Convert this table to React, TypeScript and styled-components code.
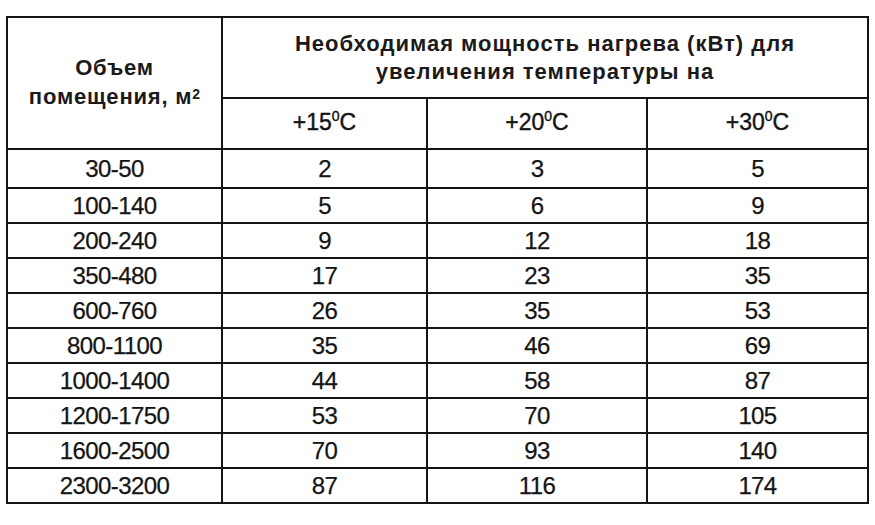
import React from "react";
import styled, { createGlobalStyle } from "styled-components";

const Global = createGlobalStyle`
  html, body { margin: 0; padding: 0; background: #fff; }
  body { font-family: "Liberation Sans", Arial, sans-serif; color: #111; }
`;

const Page = styled.div`
  width: 875px;
  height: 525px;
  padding: 16px 0 0 6px;
  box-sizing: border-box;
  background: #fff;
`;

const Table = styled.table`
  border-collapse: collapse;
  table-layout: fixed;
  width: 862px;
  border: 2px solid #151515;
`;

const Row = styled.tr<{ $h: number }>`
  height: ${(p) => p.$h}px;
`;

const Cell = styled.td`
  border: 2px solid #151515;
  padding: 0;
  text-align: center;
  vertical-align: middle;
  font-size: 24px;
  font-weight: 400;
  line-height: 1;
  color: #141414;
  letter-spacing: -0.6px;
  -webkit-text-stroke: 0.25px #141414;
`;

const HeadCell = styled(Cell)`
  font-weight: 700;
  font-size: 22px;
  line-height: 28px;
  letter-spacing: 1px;
  color: #1a1a1a;
  -webkit-text-stroke: 0;
`;

const VolumeCell = styled(HeadCell)`
  font-size: 22px;
  line-height: 29px;
  letter-spacing: 0.8px;
  padding-bottom: 2px;
`;

const TempCell = styled(Cell)`
  font-size: 23px;
  font-weight: 400;
  letter-spacing: 0;
  padding-bottom: 2px;
  -webkit-text-stroke: 0.4px #141414;
`;

const Sup = styled.sup`
  font-size: 14px;
  vertical-align: top;
  position: relative;
  top: -2px;
  letter-spacing: 0;
`;

const rows: [string, number, number, number][] = [
  ["30-50", 2, 3, 5],
  ["100-140", 5, 6, 9],
  ["200-240", 9, 12, 18],
  ["350-480", 17, 23, 35],
  ["600-760", 26, 35, 53],
  ["800-1100", 35, 46, 69],
  ["1000-1400", 44, 58, 87],
  ["1200-1750", 53, 70, 105],
  ["1600-2500", 70, 93, 140],
  ["2300-3200", 87, 116, 174],
];

export default function App() {
  return (
    <>
      <Global />
      <Page>
        <Table>
          <colgroup>
            <col style={{ width: 215 }} />
            <col style={{ width: 205 }} />
            <col style={{ width: 220 }} />
            <col style={{ width: 221 }} />
          </colgroup>
          <thead>
            <Row $h={81}>
              <VolumeCell as="th" rowSpan={2}>
                Объем
                <br />
                помещения, м<Sup>2</Sup>
              </VolumeCell>
              <HeadCell as="th" colSpan={3}>
                Необходимая мощность нагрева (кВт) для
                <br />
                увеличения температуры на
              </HeadCell>
            </Row>
            <Row $h={51}>
              {["15", "20", "30"].map((t) => (
                <TempCell as="th" key={t}>
                  +{t}
                  <Sup>0</Sup>C
                </TempCell>
              ))}
            </Row>
          </thead>
          <tbody>
            {rows.map((r, i) => (
              <Row key={r[0]} $h={i === 0 ? 39 : 35}>
                {r.map((v, j) => (
                  <Cell key={j}>{v}</Cell>
                ))}
              </Row>
            ))}
          </tbody>
        </Table>
      </Page>
    </>
  );
}
